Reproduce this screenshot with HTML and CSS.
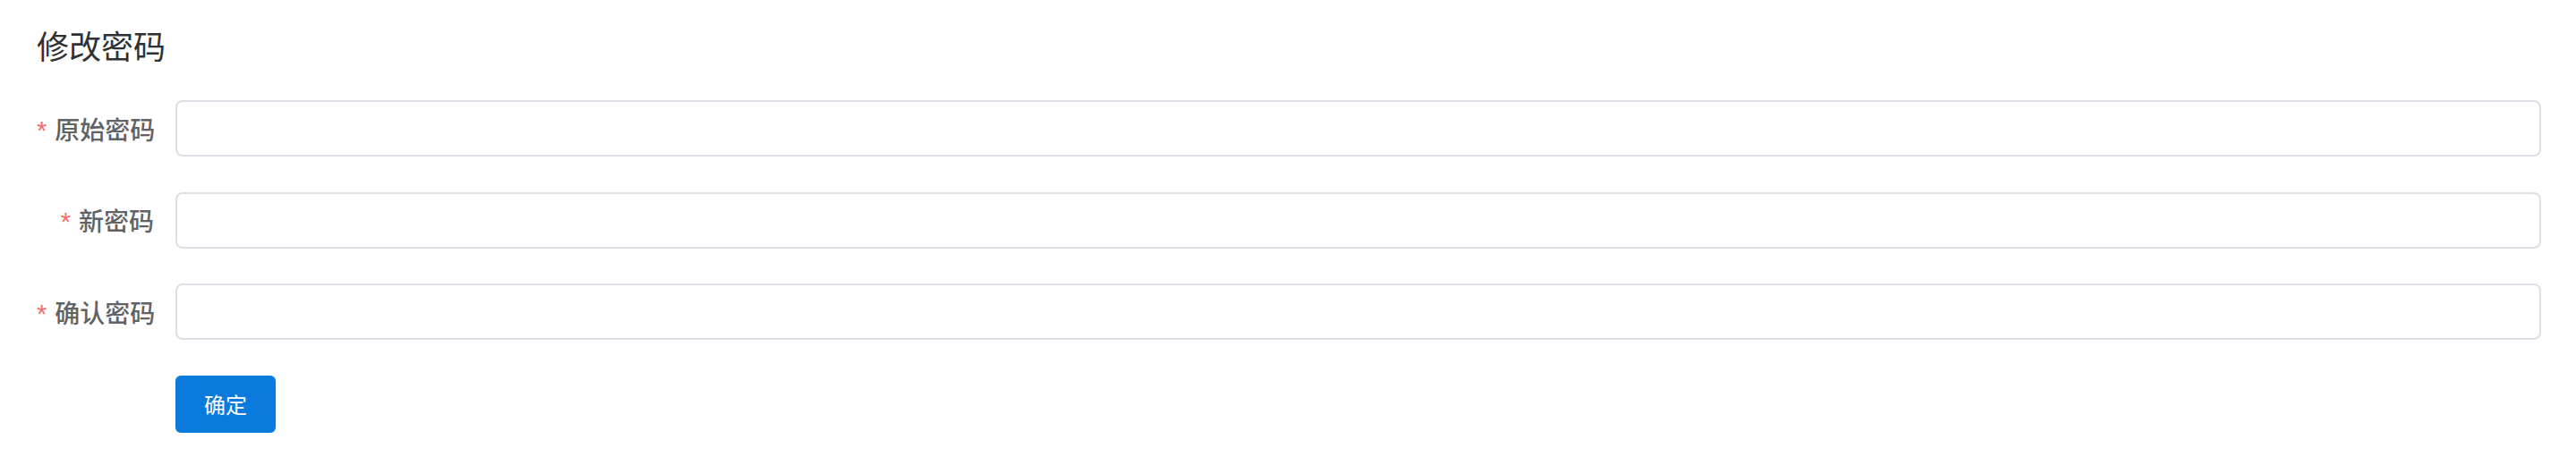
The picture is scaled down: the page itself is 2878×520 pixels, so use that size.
FILE: index.html
```html
<!DOCTYPE html>
<html lang="zh-CN">
<head>
<meta charset="utf-8">
<title>修改密码</title>
<link rel="stylesheet" href="styles.css">
</head>
<body>
<div class="page">
  <h1 class="title">修改密码</h1>
  <form class="form">
    <div class="form-item">
      <label class="label"><span class="req">*</span>原始密码</label>
      <input class="input" type="password">
    </div>
    <div class="form-item">
      <label class="label"><span class="req">*</span>新密码</label>
      <input class="input" type="password">
    </div>
    <div class="form-item">
      <label class="label"><span class="req">*</span>确认密码</label>
      <input class="input" type="password">
    </div>
    <div class="form-item">
      <span class="label"></span>
      <button class="btn" type="button">确定</button>
    </div>
  </form>
</div>
</body>
</html>
```

FILE: styles.css
```css
html, body {
  margin: 0;
  padding: 0;
  background: #ffffff;
}

.page {
  padding: 30px 39px 0 41px;
  font-family: "Noto Sans CJK SC", "Noto Sans", sans-serif;
}

.title {
  margin: 0;
  font-size: 36px;
  line-height: 40px;
  font-weight: 400;
  color: #303133;
}

.form {
  margin-top: 42px;
  display: flex;
  flex-direction: column;
  gap: 39.5px;
}

.form-item {
  display: flex;
  align-items: center;
}

.label {
  width: 155px;
  flex: none;
  box-sizing: border-box;
  padding-right: 24px;
  text-align: right;
  font-size: 28px;
  font-weight: 500;
  color: #606266;
  white-space: nowrap;
}

.req {
  color: #f56c6c;
  margin-right: 9px;
  font-size: 29px;
  font-family: "Liberation Sans", sans-serif;
}

.input {
  flex: 1;
  height: 63px;
  box-sizing: border-box;
  border: 2px solid #dcdfe6;
  border-radius: 8px;
  background: #ffffff;
  outline: none;
  padding: 0 28px;
  font-size: 27px;
}

.btn {
  width: 112px;
  height: 64px;
  border: none;
  border-radius: 6px;
  background: #0a7bdd;
  color: #ffffff;
  font-family: "Noto Sans CJK SC", "Noto Sans", sans-serif;
  font-size: 24px;
  font-weight: 400;
  padding: 0;
  cursor: pointer;
}
```
